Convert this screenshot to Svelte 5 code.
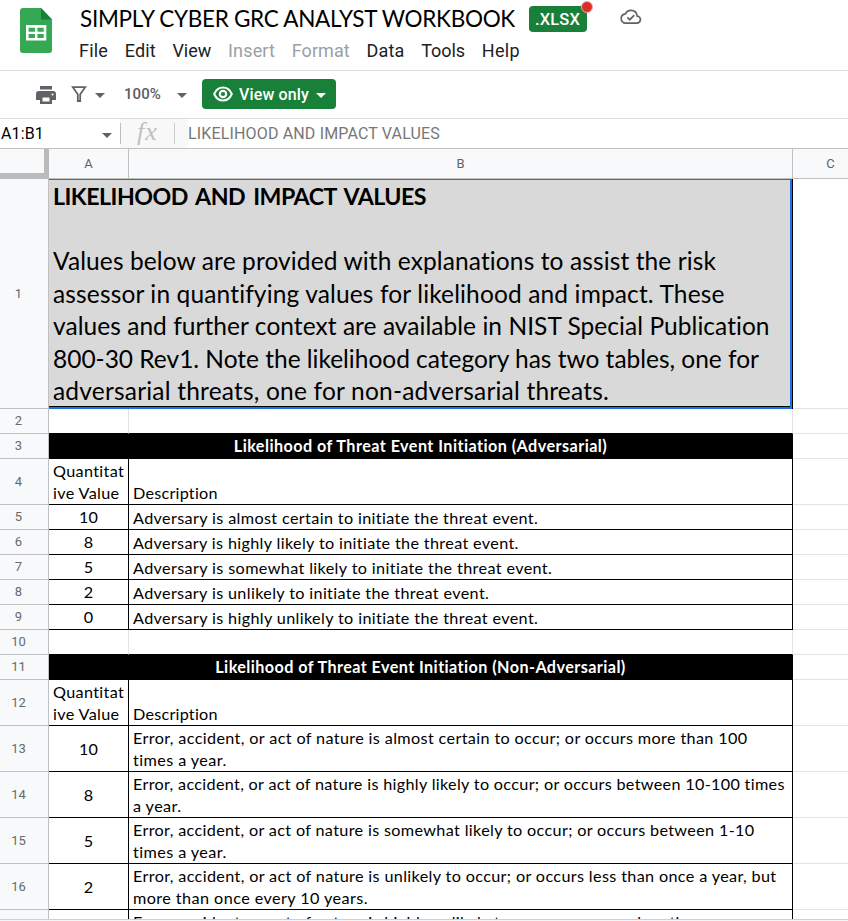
<script>
  const menus = [
    { t: 'File', w: 29 }, { t: 'Edit', w: 31 }, { t: 'View', w: 39 },
    { t: 'Insert', w: 47, off: true }, { t: 'Format', w: 58, off: true },
    { t: 'Data', w: 38 }, { t: 'Tools', w: 44 }, { t: 'Help', w: 38 }
  ];
  const E = 'Error, accident, or act of nature is ';
  const intro = [
    { t: 'Values below are provided with explanations to assist the risk', w: 663.5 },
    { t: 'assessor in quantifying values for likelihood and impact. These', w: 672 },
    { t: 'values and further context are available in NIST Special Publication', w: 717 },
    { t: '800-30 Rev1. Note the likelihood category has two tables, one for', w: 706 },
    { t: 'adversarial threats, one for non-adversarial threats.', w: 556 }
  ];
  const label = [{ t: 'Quantitat', w: 71.5 }, { t: 'ive Value', w: 66.5 }];
  const desc = [{ t: 'Description', w: 85 }];
  const rows = [
    { n: 2, h: 25, kind: 'blank' },
    { n: 3, h: 25, kind: 'band', t: 'Likelihood of Threat Event Initiation (Adversarial)', w: 374 },
    { n: 4, h: 46, kind: 'head', a: label, b: desc },
    { n: 5, h: 25, a: [{ t: '10' }], b: [{ t: 'Adversary is almost certain to initiate the threat event.', w: 405.5 }] },
    { n: 6, h: 25, a: [{ t: '8' }], b: [{ t: 'Adversary is highly likely to initiate the threat event.', w: 386 }] },
    { n: 7, h: 25, a: [{ t: '5' }], b: [{ t: 'Adversary is somewhat likely to initiate the threat event.', w: 419.5 }] },
    { n: 8, h: 25, a: [{ t: '2' }], b: [{ t: 'Adversary is unlikely to initiate the threat event.', w: 356.5 }] },
    { n: 9, h: 25, a: [{ t: '0' }], b: [{ t: 'Adversary is highly unlikely to initiate the threat event.', w: 405.5 }] },
    { n: 10, h: 25, kind: 'blank' },
    { n: 11, h: 25, kind: 'band', t: 'Likelihood of Threat Event Initiation (Non-Adversarial)', w: 411 },
    { n: 12, h: 46, kind: 'head', a: label, b: desc },
    { n: 13, h: 46, a: [{ t: '10' }], b: [{ t: E + 'almost certain to occur; or occurs more than 100', w: 614.5 }, { t: 'times a year.', w: 94 }] },
    { n: 14, h: 46, a: [{ t: '8' }], b: [{ t: E + 'highly likely to occur; or occurs between 10-100 times', w: 652 }, { t: 'a year.', w: 48.5 }] },
    { n: 15, h: 46, a: [{ t: '5' }], b: [{ t: E + 'somewhat likely to occur; or occurs between 1-10', w: 621.5 }, { t: 'times a year.', w: 94 }] },
    { n: 16, h: 46, a: [{ t: '2' }], b: [{ t: E + 'unlikely to occur; or occurs less than once a year, but', w: 643.5 }, { t: 'more than once every 10 years.', w: 235 }] },
    { n: '', h: 9, kind: 'cut', a: [], b: [{ t: E + 'highly unlikely to occur; or occurs less than once', w: 610 }] }
  ];

  // Tracks a line of text so that it spans the given width.
  function fit(node, width) {
    if (!width) return;
    const natural = node.getBoundingClientRect().width;
    node.style.letterSpacing = (width - natural) / node.textContent.length + 'px';
  }
</script>

{#snippet lines(list)}
  {#each list as l}<div class="line"><span use:fit={l.w}>{l.t}</span></div>{/each}
{/snippet}

<div class="app">
  <header>
    <svg class="logo" width="33" height="46" viewBox="0 0 33 46">
      <path fill="#34a853" d="M3 0h18l11 11.5V42a3 3 0 0 1-3 3H3a3 3 0 0 1-3-3V3a3 3 0 0 1 3-3z" />
      <path fill="#188038" d="M21 0l11 11.5H21z" />
      <path fill="#fff" fill-rule="evenodd" d="M6 17H26.300V32.500H6zM8.600 19.700v4h6.300v-4zm8.800 0v4h6.300v-4zM8.600 26v3.900h6.300V26zm8.800 0v3.900h6.300V26z" />
    </svg>
    <div class="heading">
      <div class="titlebar">
        <span class="title"><span use:fit={435}>SIMPLY CYBER GRC ANALYST WORKBOOK</span></span>
        <span class="badge"><span use:fit={45}>.XLSX</span><i></i></span>
        <svg class="cloud" width="22" height="16" viewBox="0 0 22 16" fill="none" stroke="#5f6368" stroke-width="1.7">
          <path d="M5.6 14.1h11a3.5 3.5 0 0 0 .6-7C16.700 3.500 14 1.400 11 1.400c-2.500 0-4.600 1.300-5.600 3.500C2.800 5.200 1.200 7.200 1.200 9.600c0 2.500 2 4.500 4.400 4.500z" />
          <path d="M7.300 8.300l2.500 2.400 4.500-4.500" />
        </svg>
      </div>
      <nav>
        {#each menus as m}<span class:off={m.off}><span use:fit={m.w}>{m.t}</span></span>{/each}
      </nav>
    </div>
  </header>

  <div class="toolbar">
    <svg class="print" width="20" height="18" viewBox="0 0 20 18" fill="#5f6368">
      <path d="M4 0h12v3.500H4zM3 5h14a3 3 0 0 1 3 3v6h-4v4H4v-4H0V8a3 3 0 0 1 3-3zm3.500 6.500v4h7v-4zM16.500 7.500a1 1 0 1 0 0 2 1 1 0 0 0 0-2z" fill-rule="evenodd" />
    </svg>
    <svg class="filter" width="16" height="16" viewBox="0 0 16 16" fill="none" stroke="#5f6368" stroke-width="1.800">
      <path d="M1.800 1.200h12.400L9.200 8.200V15H6.800V8.200z" />
    </svg>
    <b class="arrow"></b>
    <span class="zoom"><span use:fit={37}>100%</span></span>
    <b class="arrow"></b>
    <div class="view">
      <svg width="20" height="16" viewBox="0 0 20 16" fill="none" stroke="#fff">
        <path stroke-width="2" d="M1.200 8C3 3.800 6.300 1.500 10 1.500S17 3.800 18.800 8C17 12.200 13.700 14.500 10 14.500S3 12.200 1.200 8z" />
        <circle cx="10" cy="8" r="3.200" stroke-width="2.200" />
      </svg>
      <span class="viewtext"><span use:fit={70}>View only</span></span>
      <b class="arrow white"></b>
    </div>
  </div>

  <div class="formula">
    <div class="name"><span use:fit={43}>A1:B1</span><b class="arrow"></b></div>
    <div class="fx"><em>fx</em></div>
    <div class="value"><span use:fit={252}>LIKELIHOOD AND IMPACT VALUES</span></div>
  </div>

  <div class="sheet">
    <div class="cols">
      <div class="corner"></div>
      <div class="ca">A</div>
      <div class="cb">B</div>
      <div class="cc">C</div>
    </div>
    <div class="row" style:height="230px">
      <div class="num">1</div>
      <div class="intro">
        <div class="bigline bold"><span use:fit={373}>LIKELIHOOD AND IMPACT VALUES</span></div>
        <div class="bigline"></div>
        {#each intro as l}<div class="bigline"><span use:fit={l.w}>{l.t}</span></div>{/each}
      </div>
      <div class="c"></div>
    </div>
    {#each rows as r, i}
      <div class="row {r.kind ?? 'data'}" class:tall={r.h === 46} class:above={rows[i + 1]?.kind === 'band'} style:height="{r.h}px">
        <div class="num">{r.n}</div>
        {#if r.kind === 'band'}
          <div class="merged"><span use:fit={r.w}>{r.t}</span></div>
        {:else}
          <div class="a">{#if r.a}{@render lines(r.a)}{/if}</div>
          <div class="b">{#if r.b}{@render lines(r.b)}{/if}</div>
        {/if}
        <div class="c"></div>
      </div>
    {/each}
  </div>
  <footer></footer>
</div>

<style>
  :global(body) { margin: 0; background: #fff; }
  .app { width: 848px; height: 921px; overflow: hidden; display: flex; flex-direction: column; font-family: Roboto, "Liberation Sans", sans-serif; color: #000; }
  .app * { box-sizing: border-box; }
  span { white-space: pre; }
  header { height: 71px; flex: none; display: flex; border-bottom: 1px solid #dadce0; padding-left: 20px; }
  .logo { margin-top: 8px; }
  .heading { margin-left: 27px; }
  .titlebar { display: flex; height: 38px; }
  .title { font: 22.5px/37px Lato, sans-serif; width: 449px; padding-left: 0; }
  .badge { position: relative; width: 58px; height: 26px; margin-top: 6px; background: #188038; border-radius: 4px; color: #fff; font-weight: 500; font-size: 16.5px; line-height: 27px; padding-left: 6px; }
  .badge i { position: absolute; right: -6px; top: -5px; width: 12px; height: 12px; border-radius: 50%; background: #d93025; border: 1px solid #f0a9a4; }
  .cloud { margin: 9px 0 0 33px; }
  nav { display: flex; gap: 16.700px; margin-left: -1px; font-size: 18px; line-height: 26px; color: #202124; }
  .off { color: #9aa0a6; }
  .toolbar { height: 48px; flex: none; display: flex; align-items: center; border-bottom: 1px solid #dadce0; padding: 0 0 1px 36px; }
  .print { margin-top: 1px; }
  .filter { margin: 0 8px 0 15px; }
  .arrow { width: 0; height: 0; border: 5px solid transparent; border-top-color: #5f6368; border-bottom: 0; margin-top: 3px; }
  .zoom { width: 53px; margin-left: 19px; font-size: 15px; font-weight: 500; color: #5a5d61; }
  .view { width: 134px; height: 30px; margin-left: 15px; background: #188038; border-radius: 4px; display: flex; align-items: center; padding-left: 11px; color: #fff; font-size: 16px; font-weight: 500; }
  .viewtext { width: 76px; margin-left: 6px; margin-right: 1px; }
  .white { border-top-color: #fff; }
  .formula { height: 30px; flex: none; display: flex; border-bottom: 1px solid #c0c0c0; font-size: 16px; line-height: 29px; }
  .name { width: 120px; display: flex; align-items: center; justify-content: space-between; padding: 0 8px 0 1px; }
  .fx { width: 68px; background: linear-gradient(#bdbdbd, #bdbdbd) 0 4px / 1px 21px no-repeat, linear-gradient(#ccc, #ccc) 54px 4px / 1px 21px no-repeat, #f8f8f8; padding-left: 17px; }
  em { font: italic 26px/25px "Liberation Serif", serif; letter-spacing: 1px; color: #c0c0c0; }
  .value { color: #777; }
  .sheet { height: 770px; flex: none; overflow: hidden; }
  .cols { display: flex; height: 30px; background: #f8f9fa; font-size: 13px; line-height: 29px; text-align: center; color: #5f6368; }
  .cols > div { border-right: 1px solid #c0c0c0; border-bottom: 1px solid #c0c0c0; }
  .cols .corner { width: 49px; border-right: 5px solid #bbb; border-bottom: 6px solid #bbb; }
  .ca { width: 80px; }
  .cb { width: 664px; }
  .cols .cc { flex: 1; border-right: 0; padding-left: 20px; }
  .row { display: flex; }
  .num { width: 49px; flex: none; background: #f8f9fa; border-right: 1px solid #c0c0c0; border-bottom: 1px solid #c0c0c0; padding: 0 11px 1px 0; display: flex; align-items: center; justify-content: center; font-size: 13px; color: #666a6e; }
  .c { flex: 1; border-bottom: 1px solid #e2e3e3; }
  .intro { width: 744px; background: #d9d9d9; position: relative; border-right: 1px solid #000; padding: 1px 0 0 4px; font-family: Lato, sans-serif; }
  .intro::after { content: ""; position: absolute; inset: 0; border: solid #1a73e8; border-width: 1px 2px 2px 0; box-shadow: inset 0 -1px #000; }
  .bigline { height: 32.500px; font-size: 24.500px; line-height: 32.500px; }
  .bold { font-weight: 700; font-size: 23.2px; line-height: 33px; word-spacing: 3px; }
  .a, .b, .merged { font-family: Lato, sans-serif; font-size: 16.200px; line-height: 22px; border-right: 1px solid #000; border-bottom: 1px solid #000; overflow: hidden; }
  .a { width: 80px; display: flex; flex-direction: column; justify-content: center; text-align: center; }
  .b { width: 664px; padding-left: 4px; padding-top: 2px; }
  .tall .b { padding-top: 1px; }
  .line { height: 22px; flex: none; }
  .merged { width: 744px; background: #000; color: #fff; text-align: center; font-weight: 700; line-height: 23px; }
  .blank .a, .blank .b { border-color: #e2e3e3; }
  .above .a, .above .b { border-bottom-color: #000; }
  .head .a { text-align: left; padding-left: 4px; }
  .head.tall .b { padding-top: 23px; }
  .cut .a, .cut .b, .cut .num, .cut .c { border-bottom: 0; }
  .cut .b { padding-top: 1px; }
  footer { height: 2px; background: #f1f3f4; border-top: 1px solid #d0d0d0; }
</style>
